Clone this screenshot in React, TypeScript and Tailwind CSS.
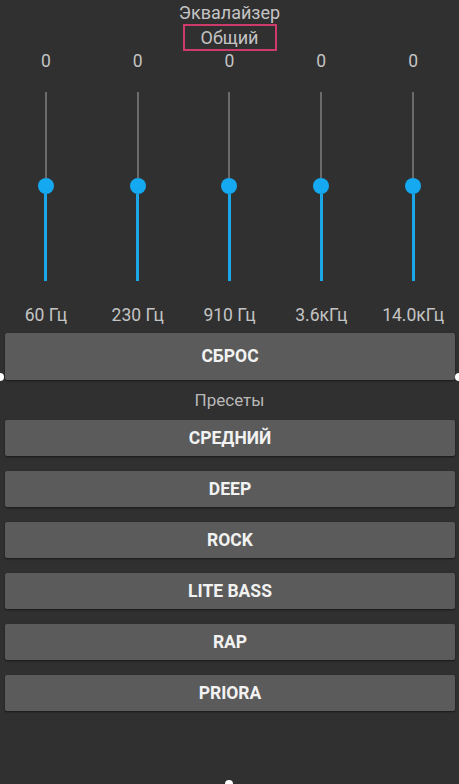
const bands = ['60 Гц', '230 Гц', '910 Гц', '3.6кГц', '14.0кГц']
const presets = ['СРЕДНИЙ', 'DEEP', 'ROCK', 'LITE BASS', 'RAP', 'PRIORA']

function Slider() {
  return (
    <div className="flex h-[189px] flex-col items-center">
      <div className="h-[86px] w-[2px] bg-[#6b6b6b]" />
      <div className="h-[16px] w-[16px] rounded-full bg-[#14a9f0]" />
      <div className="h-[87px] w-[3px] bg-[#1ba6e8]" />
    </div>
  )
}

function Btn({ label, tall }: { label: string; tall?: boolean }) {
  return (
    <button
      className={`ml-[5px] mr-[4px] flex items-center justify-center rounded-[2px] bg-[#5b5b5b] text-[17.5px] font-bold text-[#f2f2f2] shadow-[0_1px_2px_rgba(0,0,0,0.5)] ${tall ? 'h-[47px]' : 'h-[36px]'}`}
    >
      {label}
    </button>
  )
}

export default function App() {
  return (
    <div className="relative h-[784px] w-[459px] overflow-hidden bg-[#303030] font-['Roboto',sans-serif] text-[#c4c4c4]">
      <div className="flex h-[24px] items-center justify-center pt-[1px] text-[18px]">Эквалайзер</div>
      <div className="mx-auto flex h-[27px] w-[94px] items-center justify-center border-2 border-[#cf3a6c] text-[18px]">
        Общий
      </div>

      <div className="grid grid-cols-5">
        {bands.map((b, i) => (
          <div key={i} className="flex flex-col items-center">
            <div className="flex h-[20px] items-center text-[17.5px]">0</div>
            <div className="mt-[21px]">
              <Slider />
            </div>
            <div className="mt-[24px] flex h-[21px] items-center text-[17.5px]">{b}</div>
          </div>
        ))}
      </div>

      <div className="mt-[7px] flex flex-col">
        <Btn label="СБРОС" tall />
      </div>

      <div className="mt-[11px] flex h-[20px] items-center justify-center text-[17px] text-[#b8b8b8]">Пресеты</div>

      <div className="mt-[9px] flex flex-col gap-[15px]">
        {presets.map(p => (
          <Btn key={p} label={p} />
        ))}
      </div>

      {/* selection handles */}
      <div className="absolute left-[-4px] top-[373px] h-[8px] w-[8px] rounded-full bg-white" />
      <div className="absolute right-[-4px] top-[373px] h-[8px] w-[8px] rounded-full bg-white" />
      <div className="absolute left-[225px] top-[780px] h-[8px] w-[8px] rounded-full bg-white" />
    </div>
  )
}
